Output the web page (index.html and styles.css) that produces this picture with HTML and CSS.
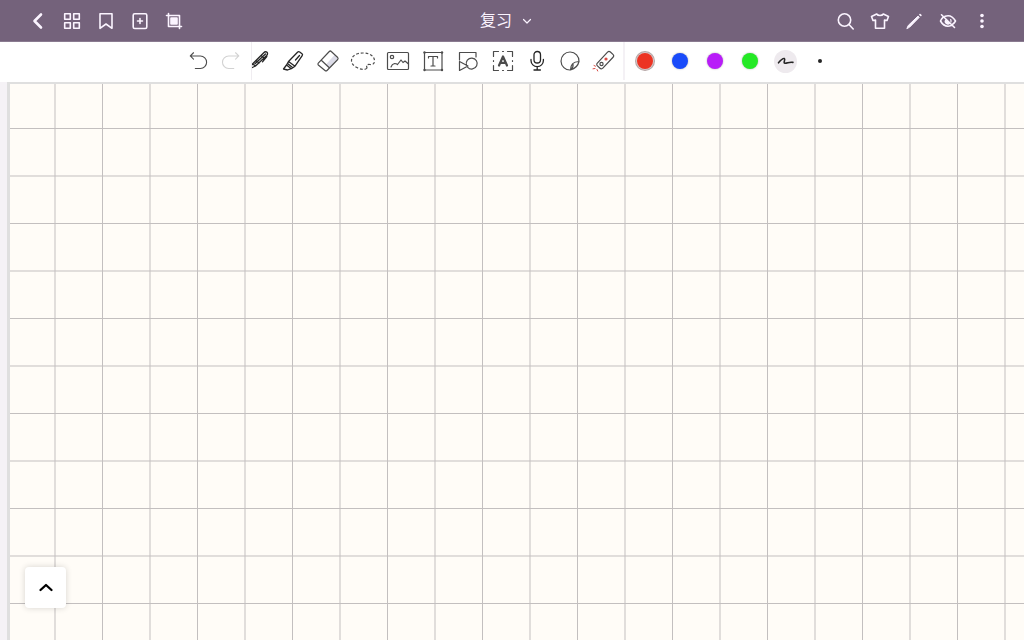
FILE: index.html
```html
<!DOCTYPE html>
<html lang="zh-CN">
<head>
<meta charset="utf-8">
<meta name="viewport" content="width=device-width, initial-scale=1">
<title>复习</title>
<link rel="stylesheet" href="styles.css">
</head>
<body>
<header class="topbar">
  <nav class="group" aria-label="笔记">
    <button class="nav-btn" aria-label="返回"><svg viewBox="0 0 20 20"><path d="M13 3.500 6.500 10l6.500 6.500" stroke-width="2.600"/></svg></button>
    <button class="nav-btn" aria-label="缩略图"><svg viewBox="0 0 20 20"><path d="M2.700 2.700h5.600v5.600H2.700zM11.700 2.700h5.600v5.600h-5.600zM2.700 11.700h5.600v5.600H2.700zM11.700 11.700h5.600v5.600h-5.600z"/></svg></button>
    <button class="nav-btn" aria-label="书签"><svg viewBox="0 0 20 20"><path d="M4 2.700h12v14.600l-6-4.300-6 4.300z"/></svg></button>
    <button class="nav-btn" aria-label="添加页面"><svg viewBox="0 0 20 20"><rect x="3.200" y="2.700" width="13.600" height="14.800" rx="1.500"/><path d="M10 7.500v5M7.500 10h5"/></svg></button>
    <button class="nav-btn" aria-label="裁剪"><svg viewBox="0 0 20 20"><path d="M2.500 4.500h13V17.500M4.500 2.500v13h13"/><rect x="7" y="7" width="6" height="6" fill="currentColor"/></svg></button>
  </nav>
  <button class="title"><span>复习</span><svg class="caret" viewBox="0 0 10 10"><path d="M1.500 3.500 5 7l3.500-3.500"/></svg></button>
  <nav class="group" aria-label="工具">
    <button class="nav-btn" aria-label="搜索"><svg viewBox="0 0 20 20"><circle cx="8.500" cy="9" r="6.200"/><path d="M13 13.500l4.200 4.500"/></svg></button>
    <button class="nav-btn" aria-label="主题"><svg viewBox="0 0 20 20"><path d="M6.700 3c1.300 2 5.300 2 6.600 0L18.500 5.500 17 9.500l-2.500-.4v8.200h-9V9.100L3 9.500 1.500 5.500z"/></svg></button>
    <button class="nav-btn" aria-label="编辑"><svg viewBox="0 0 20 20"><path d="M3 17.300l1.300-2.900 9.800-9.300 1.200 1.200L5.800 16z" fill="currentColor" stroke-width="1"/><path d="M16 3.600l.8.800" stroke-width="1.800"/></svg></button>
    <button class="nav-btn" aria-label="隐藏"><svg viewBox="0 0 20 20"><path d="M7 5.300C11 3.800 15 5.700 17.500 10c-.8 1.300-1.600 2.300-2.600 3M5 6.300C4 7.200 3.200 8.300 2.500 10c2.500 4.500 6.700 6 10.700 4.600M3.500 3.800l13 12.700"/><path d="M12.700 8.600a3 3 0 0 1 .2 2.400" stroke-width="1.200"/><path d="M7.600 8.200l4.700 4.400a3.200 3.200 0 0 1-4.700-4.400z" fill="currentColor" stroke="none"/></svg></button>
    <button class="nav-btn" aria-label="更多"><svg viewBox="0 0 20 20"><g fill="currentColor" stroke="none"><circle cx="10" cy="4.500" r="1.800"/><circle cx="10" cy="10" r="1.800"/><circle cx="10" cy="15.500" r="1.800"/></g></svg></button>
  </nav>
</header>

<div class="toolbar" role="toolbar" aria-label="画笔工具">
  <div class="history">
    <button class="history-btn" aria-label="撤销"><svg viewBox="0 0 24 24"><path d="M6 3 2.500 6.500 6 10M2.500 6.500h11a6.800 6.800 0 0 1 0 13.600H8"/></svg></button>
    <button class="history-btn" aria-label="重做" disabled><svg viewBox="0 0 24 24"><path d="M17 3l3.500 3.500L17 10M20.500 6.500h-11a6.800 6.800 0 0 0 0 13.600H15"/></svg></button>
  </div>
  <div class="tools">
    <div class="tool-strip">
      <button class="tool" aria-label="钢笔"><svg viewBox="0 0 24 24" class="dark"><path d="M2 20.500l4.500-5.500L17.500 4q2-2 3.500-.7 1.200 1.200-.3 3.200L9.500 17zM6.500 15l3 2M9 14.800 19.500 5M15 6.500l3.300 2.700M20.800 7.500l-4.300 5.300M10.500 12l2.500 2"/></svg></button>
      <button class="tool" aria-label="荧光笔"><svg viewBox="0 0 24 24" class="dark"><path d="M7.500 12.500 16.500 3.200q1-1 2.200-.2l2.300 1.700q1 .9.200 2L14 17.200zM7.500 12.500l-2 3.500 4.800 3.700 3.700-2.500M5.500 16l-3 4 4 1 3.800-1.300M6.500 14.500l5 4M14.500 11l4-4.500"/></svg></button>
      <button class="tool" aria-label="橡皮擦"><svg viewBox="0 0 24 24"><path d="M13.300 18.500 21.500 9.500 18.500 6 10 15.500z" fill="#dcdce8" stroke="none"/><path d="M2.300 14.200 13.300 2.500q1-1 2 0l6.400 6q.8 1 0 2L11 21.500q-1 1-2 0L2.300 16q-.8-.9 0-1.800zM5.300 11.300l8 7.500"/></svg></button>
      <button class="tool" aria-label="套索"><svg viewBox="0 0 26 24" class="wide"><path d="M17 19C15.500 21 11 20.800 7.500 18.800 3.500 17 1.500 14.500 1.500 11.500 1.500 7 6.500 4 13 4s11.500 3 11.500 8c0 3-2 3.800-4.500 3.500-3-.3-4 .5-3 3.500z" stroke-dasharray="2.800 1.900" stroke-linecap="butt"/></svg></button>
      <button class="tool" aria-label="图片"><svg viewBox="0 0 24 24"><rect x="1.500" y="3.500" width="21" height="17" rx="1"/><circle cx="6" cy="8" r="1.700"/><path d="M5 18q1-3 3.500-3.500 2 0 3 1l3.500-4.500 2 2.500 2-1.500 3.500 3"/></svg></button>
      <button class="tool" aria-label="文本框"><svg viewBox="0 0 24 24"><rect x="3.500" y="3.500" width="17.500" height="17.500"/><path d="M7.500 9V7.500h9V9M12 7.500v9.500M10 17h4"/><g fill="currentColor" stroke="none"><circle cx="3.500" cy="3.500" r="1.200"/><circle cx="21" cy="3.500" r="1.200"/><circle cx="3.500" cy="21" r="1.200"/><circle cx="21" cy="21" r="1.200"/></g></svg></button>
      <button class="tool" aria-label="图形"><svg viewBox="0 0 24 24"><path d="M3.500 11V3.500h16.500V8M3.500 12.500v9l8.500-4.500zM10.500 16.300a5.500 5.500 0 1 1 1.200 2"/></svg></button>
      <button class="tool" aria-label="文字识别"><svg viewBox="0 0 24 24"><path d="M2.500 7.500v-5h5M16.500 2.500h5v5M21.500 16.500v5h-5M7.500 21.500h-5v-5M11.500 2.500h1M11.500 21.500h1M2.500 11.500v1M21.500 11.500v1"/><path d="M8 16.500 12 7.500l4 9M9.300 13.800h5.400" stroke-width="2.200"/></svg></button>
      <button class="tool narrow" aria-label="录音"><svg viewBox="0 0 24 24" class="dark"><rect x="9" y="2.500" width="6.500" height="11.500" rx="3.250"/><path d="M6 10.500v1a6.200 6.200 0 0 0 12.400 0v-1M12.200 17.700v3.300M9 21h6.400"/></svg></button>
      <button class="tool narrow" aria-label="贴纸"><svg viewBox="0 0 24 24"><path d="M12.500 21A9 9 0 1 1 21 12.500M12.500 21c0-5 2.500-8.500 8.500-8.500q-1.500 6.500-8.500 8.500zM13 20.500q2.500-2 2-5.500"/></svg></button>
      <button class="tool narrow" aria-label="激光笔"><svg viewBox="0 0 24 24"><rect x="4.500" y="7.500" width="19" height="7.500" rx="2" transform="rotate(-47 14 11)"/><circle cx="10.500" cy="15" r="1.600"/><g class="laser"><circle cx="15" cy="10" r="1" fill="currentColor"/><path d="M4.500 17.200l-1.500-.7M4 19.500l-2 .3M6 20.500l.7 1.500" stroke-width="1"/></g></svg></button>
    </div>
  </div>
  <div class="swatches">
    <button class="swatch-btn" aria-label="红色"><span class="swatch red selected"></span></button>
    <button class="swatch-btn" aria-label="蓝色"><span class="swatch blue"></span></button>
    <button class="swatch-btn" aria-label="紫色"><span class="swatch purple"></span></button>
    <button class="swatch-btn" aria-label="绿色"><span class="swatch green"></span></button>
    <button class="swatch-btn" aria-label="线型"><span class="stroke-style"><svg viewBox="0 0 24 24"><path d="M4 13.500Q8.500 8 10.800 8.700c1.500.7-2 5.300.7 5.300 3 0 4.500-1.700 9-1"/></svg></span></button>
    <button class="swatch-btn" aria-label="粗细"><span class="dot"></span></button>
  </div>
</div>

<main class="workspace">
  <div class="paper">
    <svg class="grid" aria-hidden="true">
      <defs>
        <pattern id="cells" x="44" y="44" width="95" height="95" patternUnits="userSpaceOnUse">
          <path d="M1 0v95M48.500 0v95M0 .5h95M0 48h95"/>
        </pattern>
      </defs>
      <rect width="100%" height="100%" fill="url(#cells)"/>
    </svg>
  </div>
  <button class="expand" aria-label="展开"><svg viewBox="0 0 16 16"><path d="M2.500 10 8 5l5.500 5"/></svg></button>
</main>
</body>
</html>
```
FILE: styles.css
```css
* {
  box-sizing: border-box;
}

body {
  margin: 0;
  min-height: 100vh;
  display: flex;
  flex-direction: column;
  background: #fff;
  font-family: "Liberation Sans", "Noto Sans CJK SC", sans-serif;
}

button {
  display: flex;
  align-items: center;
  justify-content: center;
  flex: none;
  padding: 0;
  border: 0;
  background: none;
  color: inherit;
  font: inherit;
}

svg {
  display: block;
  fill: none;
  stroke: currentColor;
  stroke-linecap: round;
  stroke-linejoin: round;
}

.topbar {
  display: grid;
  grid-template-columns: 1fr auto 1fr;
  align-items: center;
  height: 42px;
  padding: 0 25px 0 21px;
  background: #74627b;
  border-bottom: 1px solid #8a7b90;
  color: #fbf4ff;
}

.group {
  display: flex;
}

.group:last-child {
  justify-content: flex-end;
}

.nav-btn {
  width: 34px;
  height: 40px;
}

.nav-btn svg {
  width: 20px;
  height: 20px;
  stroke-width: 1.6;
}

.title {
  gap: 10px;
  font-size: 16px;
  line-height: 24px;
  padding-right: 8px;
}

.caret {
  width: 10px;
  height: 10px;
  stroke-width: 1.2;
}

.toolbar {
  display: flex;
  justify-content: center;
  height: 40px;
  padding-bottom: 2px;
  background: #fff;
  color: #4c4c4c;
}

.history,
.tool-strip,
.swatches {
  display: flex;
  align-items: center;
}

.history {
  padding-right: 4px;
}

.history-btn {
  width: 32px;
  height: 38px;
}

.history-btn:disabled {
  color: #d2d2d2;
}

.tools {
  display: flex;
  justify-content: flex-end;
  width: 374px;
  padding-right: 3px;
  overflow: hidden;
  border-left: 1px solid #f0edf1;
  border-right: 2px solid #f4f1f5;
}

.tool {
  width: 35px;
  height: 38px;
}

.narrow {
  width: 33px;
}

.history-btn svg,
.tool svg {
  width: 24px;
  height: 24px;
  stroke-width: 1.2;
}

.history-btn svg {
  width: 22px;
  height: 22px;
}

.tool .wide {
  width: 26px;
}

.tool .dark {
  color: #252525;
  stroke-width: 1.3;
}

.laser {
  color: #d94b45;
}

.swatches {
  padding: 0 4px 0 3px;
}

.swatch-btn {
  width: 35px;
  height: 38px;
}

.swatch {
  width: 16px;
  height: 16px;
  border-radius: 50%;
  box-shadow: 0 0 2px #aaa;
}

.red {
  background: #ec3323;
}

.blue {
  background: #194bfa;
}

.purple {
  background: #b81cf8;
}

.green {
  background: #24e925;
}

.selected {
  box-shadow: 0 0 0 1px #d8c8c8, 0 0 0 2px #b5a6a6;
}

.stroke-style {
  display: flex;
  align-items: center;
  justify-content: center;
  width: 23px;
  height: 23px;
  border-radius: 50%;
  background: #eeeaee;
  color: #252525;
}

.stroke-style svg {
  width: 21px;
  height: 21px;
  stroke-width: 1.8;
}

.dot {
  width: 4px;
  height: 4px;
  border-radius: 50%;
  background: #252525;
}

.workspace {
  position: relative;
  display: flex;
  flex: 1;
  padding-left: 7px;
  background: #f5f2f6;
}

.paper {
  display: flex;
  flex: 1;
  border-top: 2px solid #dfdfdf;
  border-left: 3px solid #dfdfdf;
  background: #fffcf7;
}

.grid {
  flex: 1;
  width: 100%;
  height: auto;
  color: #c3bfbf;
}

.grid rect {
  stroke: none;
}

.expand {
  position: absolute;
  left: 25px;
  bottom: 32px;
  width: 41px;
  height: 41px;
  border-radius: 4px;
  background: #fff;
  color: #000;
  box-shadow: 0 0 6px rgba(0, 0, 0, 0.16);
}

.expand svg {
  width: 16px;
  height: 16px;
  stroke-width: 2.3;
}
```
